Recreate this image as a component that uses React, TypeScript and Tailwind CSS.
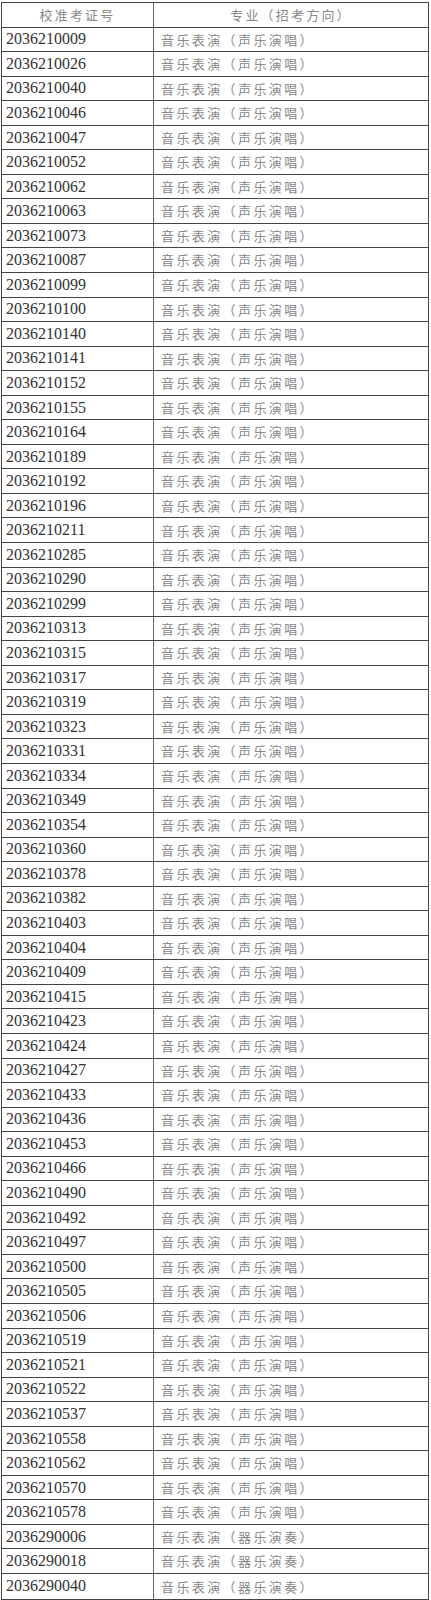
const ids = [
  '2036210009', '2036210026', '2036210040', '2036210046', '2036210047', '2036210052',
  '2036210062', '2036210063', '2036210073', '2036210087', '2036210099', '2036210100',
  '2036210140', '2036210141', '2036210152', '2036210155', '2036210164', '2036210189',
  '2036210192', '2036210196', '2036210211', '2036210285', '2036210290', '2036210299',
  '2036210313', '2036210315', '2036210317', '2036210319', '2036210323', '2036210331',
  '2036210334', '2036210349', '2036210354', '2036210360', '2036210378', '2036210382',
  '2036210403', '2036210404', '2036210409', '2036210415', '2036210423', '2036210424',
  '2036210427', '2036210433', '2036210436', '2036210453', '2036210466', '2036210490',
  '2036210492', '2036210497', '2036210500', '2036210505', '2036210506', '2036210519',
  '2036210521', '2036210522', '2036210537', '2036210558', '2036210562', '2036210570',
  '2036210578', '2036290006', '2036290018', '2036290040',
];

const cjk = { fontFamily: '"Noto Sans CJK SC", "Liberation Serif", serif' };
const num = { fontFamily: '"Liberation Serif", "Noto Sans CJK SC", serif' };

export default function App() {
  return (
    <div className="bg-white w-[431px] h-[1600px] pt-[2px] pl-[1px]">
      <div className="w-[428px] border border-[#444] flex flex-col">
        {/* Header */}
        <div className="flex h-[24.55px] border-b border-[#444]">
          <div
            className="w-[152px] shrink-0 border-r border-[#666] flex items-center justify-center text-[13px] tracking-[2.2px] text-[#888]"
            style={cjk}
          >
            校准考证号
          </div>
          <div
            className="flex-1 flex items-center justify-center text-[13px] tracking-[2.2px] text-[#888]"
            style={cjk}
          >
            专业（招考方向）
          </div>
        </div>

        {/* Rows */}
        {ids.map((id, i) => (
          <div
            key={id}
            className={
              'flex h-[24.55px] ' + (i < ids.length - 1 ? 'border-b border-[#444]' : '')
            }
          >
            <div
              className="w-[152px] shrink-0 border-r border-[#666] flex items-center pl-[4px] text-[16px] text-[#333]"
              style={num}
            >
              {id}
            </div>
            <div
              className="flex-1 flex items-center pl-[7px] text-[13px] tracking-[2.4px] text-[#888]"
              style={cjk}
            >
              {id.startsWith('20362900') ? '音乐表演（器乐演奏）' : '音乐表演（声乐演唱）'}
            </div>
          </div>
        ))}
      </div>
    </div>
  );
}
